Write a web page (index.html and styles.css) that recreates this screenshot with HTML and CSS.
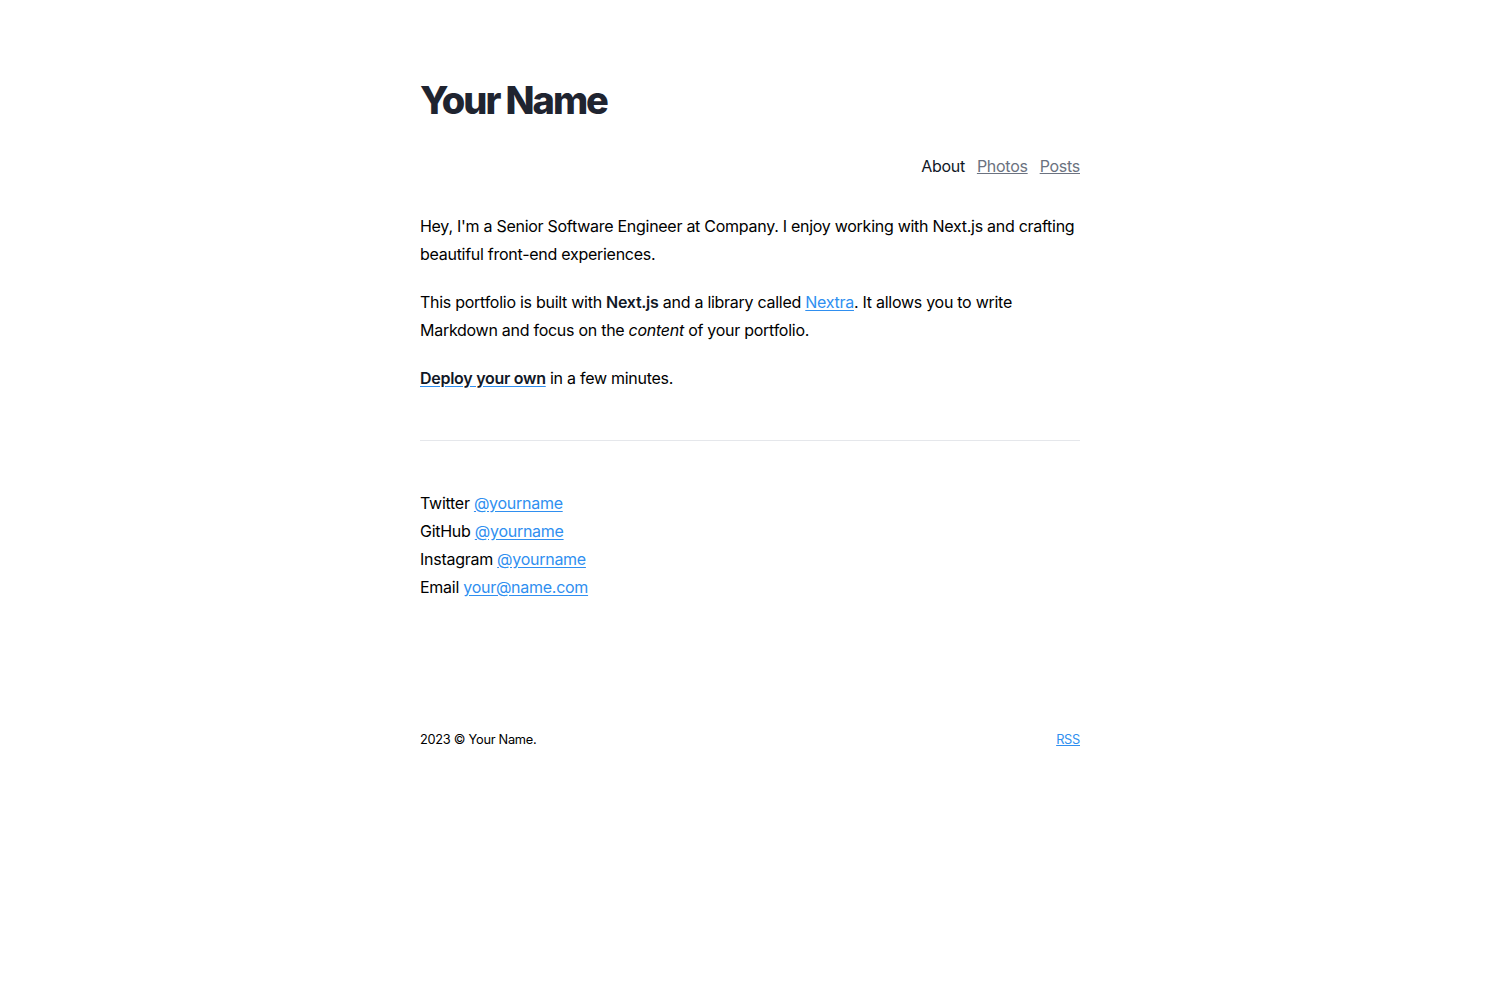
FILE: index.html
```html
<!DOCTYPE html>
<html lang="en">
<head>
<meta charset="utf-8">
<title>Your Name</title>
<link rel="stylesheet" href="styles.css">
</head>
<body>
<main class="container">
  <h1 class="title">Your Name</h1>
  <nav class="nav">
    <span class="nav-current">About</span>
    <a class="nav-link" href="#">Photos</a>
    <a class="nav-link" href="#">Posts</a>
  </nav>
  <article class="prose">
    <p>Hey, I'm a Senior Software Engineer at Company. I enjoy working with Next.js and crafting beautiful front-end experiences.</p>
    <p>This portfolio is built with <strong>Next.js</strong> and a library called <a class="link" href="#">Nextra</a>. It allows you to write Markdown and focus on the <em>content</em> of your portfolio.</p>
    <p><a class="link" href="#"><strong>Deploy your own</strong></a> in a few minutes.</p>
    <hr class="rule">
    <p class="contacts">
      Twitter <a class="link" href="#">@yourname</a><br>
      GitHub <a class="link" href="#">@yourname</a><br>
      Instagram <a class="link" href="#">@yourname</a><br>
      Email <a class="link" href="#">your@name.com</a>
    </p>
  </article>
  <footer class="footer">
    <small class="copy">2023 © Your Name.</small>
    <a class="rss" href="#">RSS</a>
  </footer>
</main>
</body>
</html>
```
FILE: styles.css
```css
html, body {
  margin: 0;
  padding: 0;
  background: #fff;
}
body {
  font-family: Inter, "Noto Sans", sans-serif;
  color: #000;
  font-size: 16px;
  line-height: 28px;
  letter-spacing: -0.017em;
}
.container {
  width: 660px;
  margin: 0 auto;
  padding-top: 72px;
}
.title {
  margin: 0;
  font-size: 38px;
  line-height: 56px;
  font-weight: 800;
  letter-spacing: -0.054em;
  color: #1f2430;
}
.nav {
  display: flex;
  justify-content: flex-end;
  gap: 12px;
  margin-top: 24px;
  font-size: 16px;
  line-height: 28px;
}
.nav-current {
  color: #111827;
}
.nav-link {
  color: #6b7280;
  text-decoration: underline;
}
.prose {
  margin-top: 32px;
}
.prose p {
  margin: 0 0 20px;
}
.prose strong {
  font-weight: 600;
  color: #111827;
}
.link {
  color: #2f8ff0;
  text-decoration: underline;
  text-underline-offset: 2px;
}
.rule {
  border: 0;
  border-top: 1px solid #e5e7eb;
  margin: 48px 0 48px;
}
.footer {
  display: flex;
  justify-content: space-between;
  align-items: center;
  margin-top: 129px;
  font-size: 12.8px;
  line-height: 20px;
}
.copy {
  font-size: 12.8px;
}
.rss {
  color: #2f8ff0;
  text-decoration: underline;
}
```
